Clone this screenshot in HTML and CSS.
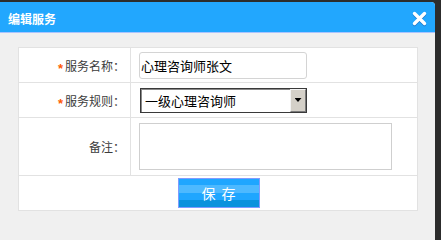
FILE: index.html
```html
<!DOCTYPE html>
<html lang="zh-CN">
<head>
<meta charset="utf-8">
<title>编辑服务</title>
<link rel="stylesheet" href="styles.css">
</head>
<body>
<div class="dialog">
  <div class="dlg-head">
    <span class="dlg-title">编辑服务</span>
    <span class="dlg-close" aria-label="关闭">
      <svg width="15" height="15" viewBox="0 0 15 15"><path d="M2.5 2.5 L12.5 12.5 M12.5 2.5 L2.5 12.5" stroke="#fff" stroke-width="3.4" stroke-linecap="round" fill="none"/></svg>
    </span>
  </div>
  <div class="dlg-body">
    <form class="form-grid">
      <div class="lbl"><span class="req">*</span>服务名称：</div>
      <div class="fld"><input class="txt" type="text" value="心理咨询师张文"></div>
      <div class="lbl"><span class="req">*</span>服务规则：</div>
      <div class="fld">
        <div class="sel-wrap">
          <select class="sel"><option>一级心理咨询师</option></select>
          <span class="sel-btn"></span>
        </div>
      </div>
      <div class="lbl">备注：</div>
      <div class="fld"><textarea class="memo"></textarea></div>
      <div class="actions"><button type="button" class="btn-save"><span>保</span><span>存</span></button></div>
    </form>
  </div>
</div>
</body>
</html>
```

FILE: styles.css
```css
html, body {
  margin: 0;
  height: 100%;
}
body {
  background: #2c2c2c;
  font-family: "Liberation Sans", "Noto Sans CJK SC", sans-serif;
  overflow: hidden;
}
.dialog {
  margin-top: 2px;
  width: 435px;
  height: calc(100% - 2px);
  min-height: 222px;
  background: #f0f0f0;
  border-top-right-radius: 4px;
  overflow: hidden;
}
.dlg-head {
  box-sizing: border-box;
  height: 31px;
  padding: 3px 8px 0 8px;
  background: #22a7fe;
  border-bottom: 1px solid #a9c4ff;
  display: flex;
  align-items: center;
  justify-content: space-between;
}
.dlg-title {
  color: #fff;
  font-size: 12px;
  font-weight: bold;
  font-family: "Noto Sans CJK SC", sans-serif;
}
.dlg-close {
  display: flex;
  width: 15px;
  height: 15px;
  filter: drop-shadow(0 1px 0 rgba(20, 80, 160, 0.55));
}
.dlg-body {
  padding: 14px 18px 0 18px;
}
.form-grid {
  display: grid;
  grid-template-columns: 111px 286px;
  grid-template-rows: 34px 34px 57px 34px;
  gap: 1px;
  width: max-content;
  background: #e2e2e2;
  border: 1px solid #e2e2e2;
  margin: 0;
}
.lbl {
  background: #fff;
  display: flex;
  align-items: center;
  justify-content: flex-end;
  padding-right: 5px;
  font-size: 12px;
  color: #3c3c3c;
  font-family: "Noto Sans CJK SC", sans-serif;
}
.req {
  color: #ff5a00;
  font-family: "Liberation Sans", sans-serif;
  font-size: 13px;
  font-weight: bold;
  margin-right: 2px;
  transform: translateY(3px);
}
.fld {
  background: #fff;
  display: flex;
  align-items: center;
  padding-left: 8px;
}
.txt {
  box-sizing: border-box;
  width: 168px;
  height: 27px;
  margin: 0;
  padding: 0 0 0 1px;
  border: 1px solid #d4d4d4;
  border-radius: 3px;
  font: 13px "Noto Sans CJK SC", sans-serif;
  color: #000;
  background: #fff;
  outline: none;
}
.sel-wrap {
  position: relative;
  width: 167px;
  height: 25px;
  margin-left: 1px;
}
.sel {
  appearance: none;
  -webkit-appearance: none;
  box-sizing: border-box;
  width: 100%;
  height: 100%;
  margin: 0;
  padding: 0 0 0 4px;
  border: 1px solid #3a3a3a;
  border-radius: 0;
  box-shadow: inset 1px 1px 0 #8a8a8a;
  background: #fff;
  font: 13px "Noto Sans CJK SC", sans-serif;
  color: #000;
  outline: none;
}
.sel-btn {
  position: absolute;
  top: 1px;
  right: 1px;
  bottom: 1px;
  width: 16px;
  box-sizing: border-box;
  background: #d4d0c8;
  border: 1px solid;
  border-color: #f4f4f4 #7a7a7a #7a7a7a #f4f4f4;
  display: flex;
  align-items: center;
  justify-content: center;
  pointer-events: none;
}
.sel-btn::after {
  content: "";
  width: 7px;
  height: 4px;
  background: #000;
  clip-path: polygon(0 0, 100% 0, 50% 100%);
}
.memo {
  box-sizing: border-box;
  width: 253px;
  height: 47px;
  margin: 0;
  border: 1px solid #cfcfcf;
  resize: none;
  background: #fff;
  outline: none;
}
.actions {
  grid-column: 1 / -1;
  background: #fff;
  display: flex;
  align-items: center;
  justify-content: center;
}
.btn-save {
  box-sizing: border-box;
  width: 82px;
  height: 30px;
  margin: 0 0 0 1px;
  padding: 0;
  border: 1px solid #7f9bff;
  background: linear-gradient(to bottom,
    #1fa6ff 0, #1fa6ff 6px,
    #4db9ff 6px, #4db9ff 14px,
    #1fa6ff 14px, #1fa6ff 21px,
    #0a92dd 21px, #0a92dd 28px);
  color: #fff;
  font: 14px "Noto Sans CJK SC", sans-serif;
  cursor: pointer;
  display: flex;
  align-items: center;
  justify-content: center;
  gap: 6px;
}
```
